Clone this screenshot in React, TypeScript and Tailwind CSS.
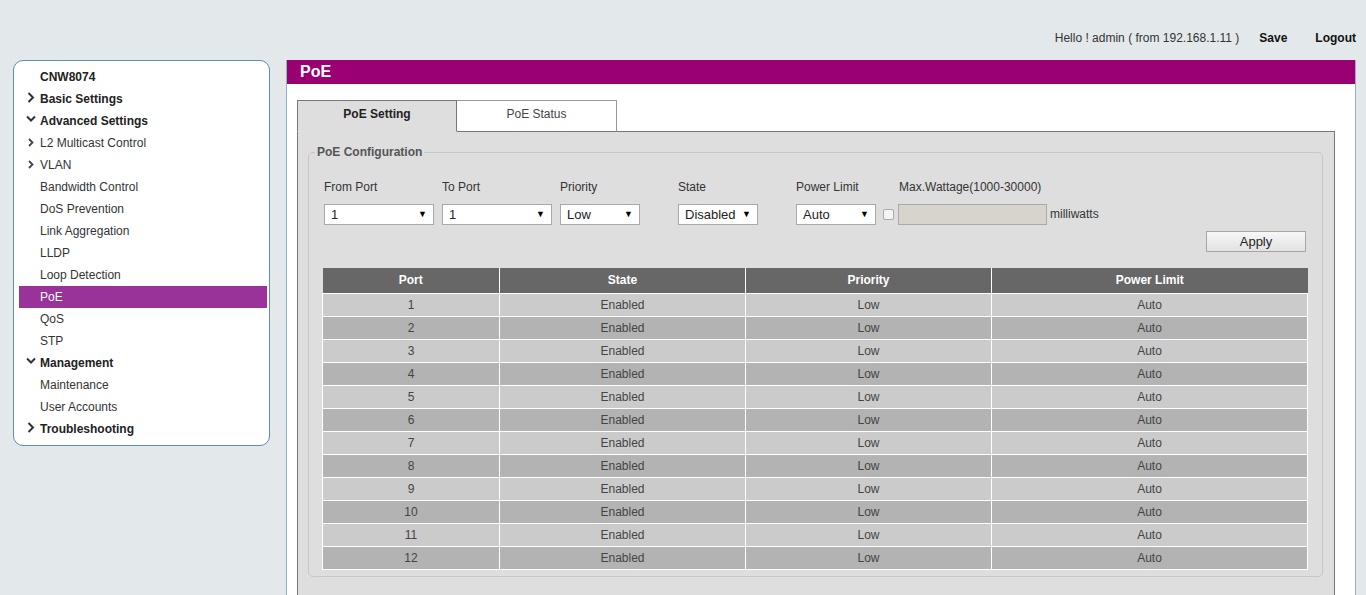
import React from "react";

const menu: { label: string; kind: "title" | "group" | "sub" | "item"; open?: boolean; active?: boolean }[] = [
  { label: "CNW8074", kind: "title" },
  { label: "Basic Settings", kind: "group", open: false },
  { label: "Advanced Settings", kind: "group", open: true },
  { label: "L2 Multicast Control", kind: "sub" },
  { label: "VLAN", kind: "sub" },
  { label: "Bandwidth Control", kind: "item" },
  { label: "DoS Prevention", kind: "item" },
  { label: "Link Aggregation", kind: "item" },
  { label: "LLDP", kind: "item" },
  { label: "Loop Detection", kind: "item" },
  { label: "PoE", kind: "item", active: true },
  { label: "QoS", kind: "item" },
  { label: "STP", kind: "item" },
  { label: "Management", kind: "group", open: true },
  { label: "Maintenance", kind: "item" },
  { label: "User Accounts", kind: "item" },
  { label: "Troubleshooting", kind: "group", open: false },
];

const ports = Array.from({ length: 12 }, (_, i) => i + 1);

function Chevron({ open, small }: { open?: boolean; small?: boolean }) {
  if (open) {
    return (
      <svg width="10" height="8" viewBox="0 0 10 8" className="mt-[-4px] ml-[-1px]">
        <polyline points="1,1.5 5,5.5 9,1.5" fill="none" stroke="#333" strokeWidth="2" />
      </svg>
    );
  }
  if (small) {
    return (
      <svg width="6" height="9" viewBox="0 0 6 9" className="ml-[1px] mt-[-2px]">
        <polyline points="1,1 4.5,4.5 1,8" fill="none" stroke="#444" strokeWidth="1.8" />
      </svg>
    );
  }
  return (
    <svg width="8" height="11" viewBox="0 0 8 11" className="mt-[-3px]">
      <polyline points="1.5,1 6,5.5 1.5,10" fill="none" stroke="#333" strokeWidth="2" />
    </svg>
  );
}

function Select({ value, width }: { value: string; width: string }) {
  return (
    <div
      className={`${width} h-[21px] bg-white border border-[#a9a9a9] flex items-center justify-between pl-[6px] pr-[6px] text-[13px] text-[#222]`}
    >
      <span>{value}</span>
      <span className="text-[9px] leading-none text-black">▼</span>
    </div>
  );
}

export default function App() {
  return (
    <div className="w-[1366px] h-[595px] overflow-hidden bg-[#e3e8eb] font-['Liberation_Sans',Arial,sans-serif]">
      {/* Top bar */}
      <div className="h-[60px] flex justify-end items-start pt-[31px] pr-[10px] text-[12px] leading-[14px]">
        <span className="text-[#333]">Hello ! admin ( from 192.168.1.11 )</span>
        <span className="ml-[20px] font-bold text-[#111]">Save</span>
        <span className="ml-[28px] font-bold text-[#111]">Logout</span>
      </div>

      <div className="flex items-start pl-[13px]">
        {/* Sidebar */}
        <div className="w-[257px] bg-white border border-[#5f8db3] rounded-[10px] pt-[5px] pb-[5px] pl-[5px] pr-[2px]">
          {menu.map((m) => (
            <div
              key={m.label}
              className={`h-[22px] flex items-center text-[12px] ${
                m.active ? "bg-[#993399] text-white" : m.kind === "title" || m.kind === "group" ? "text-[#222] font-bold" : "text-[#333]"
              }`}
            >
              <div className="w-[21px] flex justify-start pl-[8px]">
                {m.kind === "group" && <Chevron open={m.open} />}
                {m.kind === "sub" && <Chevron small />}
              </div>
              <span>{m.label}</span>
            </div>
          ))}
        </div>

        {/* Main panel */}
        <div className="ml-[16px] w-[1070px] h-[560px] bg-white border-x border-[#8fb1cc]">
          <div className="h-[24px] bg-[#9b0072] flex items-center pl-[13px] text-white font-bold text-[16px]">PoE</div>

          <div className="pt-[16px] pl-[10px] pr-[20px]">
            {/* Tabs */}
            <div className="flex relative z-10 -mb-px">
              <div className="w-[160px] h-[32px] pb-[4px] bg-[#dedede] border border-[#777] border-b-[#dedede] flex items-center justify-center text-[12px] font-bold text-[#222]">
                PoE Setting
              </div>
              <div className="w-[160px] h-[32px] pb-[4px] bg-white border border-l-0 border-[#999] border-b-[#777] flex items-center justify-center text-[12px] text-[#444]">
                PoE Status
              </div>
            </div>

            {/* Tab content */}
            <div className="h-[500px] bg-[#dedede] border border-[#777] pt-[13px] pl-[10px] pr-[11px]">
              <fieldset className="border border-[#c3c8cb] rounded-[5px] pb-[6px]">
                <legend className="ml-[6px] px-[2px] text-[12px] font-bold text-[#555] leading-[14px]">PoE Configuration</legend>

                {/* Form */}
                <div className="flex pl-[15px] mt-[21px] text-[12px] text-[#333]">
                  <div className="w-[118px]">
                    <div className="h-[14px] leading-[14px]">From Port</div>
                    <div className="mt-[10px]"><Select value="1" width="w-[110px]" /></div>
                  </div>
                  <div className="w-[118px]">
                    <div className="h-[14px] leading-[14px]">To Port</div>
                    <div className="mt-[10px]"><Select value="1" width="w-[110px]" /></div>
                  </div>
                  <div className="w-[118px]">
                    <div className="h-[14px] leading-[14px]">Priority</div>
                    <div className="mt-[10px]"><Select value="Low" width="w-[80px]" /></div>
                  </div>
                  <div className="w-[118px]">
                    <div className="h-[14px] leading-[14px]">State</div>
                    <div className="mt-[10px]"><Select value="Disabled" width="w-[80px]" /></div>
                  </div>
                  <div className="w-[103px]">
                    <div className="h-[14px] leading-[14px]">Power Limit</div>
                    <div className="mt-[10px]"><Select value="Auto" width="w-[80px]" /></div>
                  </div>
                  <div>
                    <div className="h-[14px] leading-[14px]">Max.Wattage(1000-30000)</div>
                    <div className="mt-[10px] h-[21px] flex items-center ml-[-16px]">
                      <div className="w-[11px] h-[11px] border border-[#aaa] rounded-[2px] bg-[#f4f4f4]" />
                      <div className="ml-[4px] w-[149px] h-[21px] bg-[#d7d3cd] border border-[#aaa]" />
                      <span className="ml-[3px] mt-[-2px]">milliwatts</span>
                    </div>
                  </div>
                </div>

                <div className="flex justify-end pr-[16px] mt-[6px]">
                  <div className="w-[100px] h-[21px] border border-[#a6a6a6] bg-gradient-to-b from-[#f7f7f7] to-[#e2e2e2] flex items-center justify-center text-[13px] text-[#222]">
                    Apply
                  </div>
                </div>

                {/* Table */}
                <table className="mt-[16px] ml-[13px] w-[986px] border-collapse text-[12px] text-center">
                  <thead>
                    <tr className="h-[25px] bg-[#676767] text-white font-bold">
                      <th className="w-[177px] border border-white border-t-0 border-l-0">Port</th>
                      <th className="w-[246px] border border-white border-t-0">State</th>
                      <th className="w-[246px] border border-white border-t-0">Priority</th>
                      <th className="border border-white border-t-0 border-r-0">Power Limit</th>
                    </tr>
                  </thead>
                  <tbody className="text-[#444]">
                    {ports.map((p) => (
                      <tr key={p} className={`h-[23px] ${p % 2 === 1 ? "bg-[#cbcbcb]" : "bg-[#b3b3b3]"}`}>
                        <td className="border border-white">{p}</td>
                        <td className="border border-white">Enabled</td>
                        <td className="border border-white">Low</td>
                        <td className="border border-white">Auto</td>
                      </tr>
                    ))}
                  </tbody>
                </table>
              </fieldset>
            </div>
          </div>
        </div>
      </div>
    </div>
  );
}
